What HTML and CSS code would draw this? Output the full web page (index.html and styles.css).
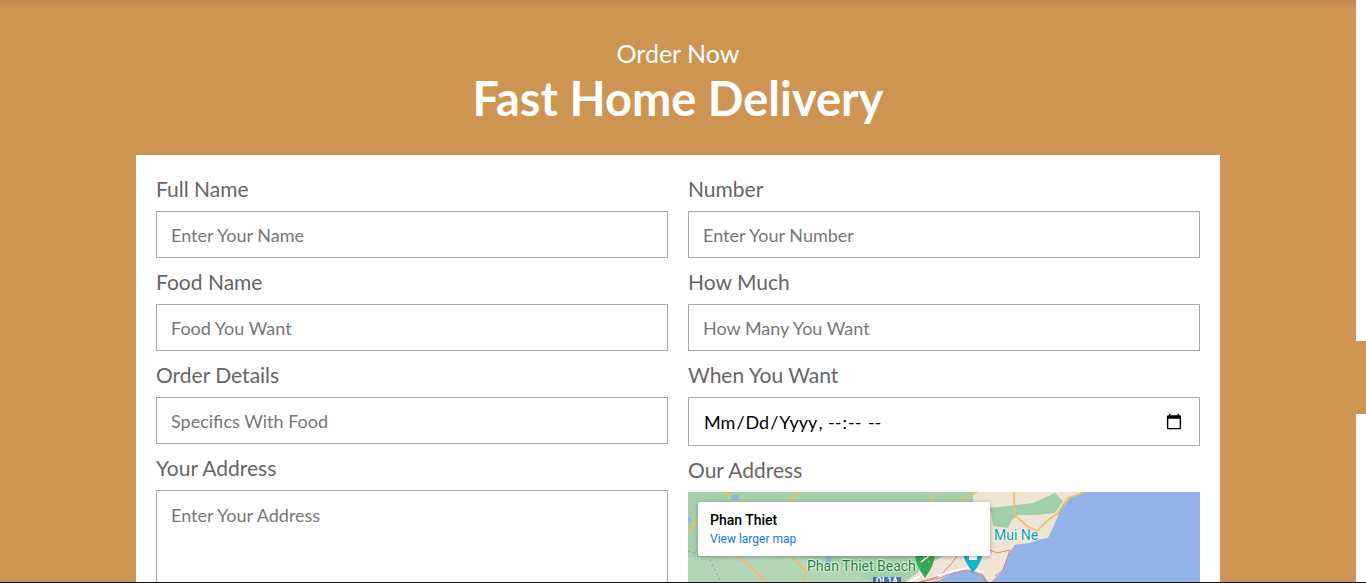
FILE: index.html
```html
<!DOCTYPE html>
<html lang="en">
<head>
<meta charset="utf-8">
<title>Fast Home Delivery</title>
<link rel="stylesheet" href="styles.css">
</head>
<body>
<main class="order">
  <div class="shade"></div>
  <header class="heading">
    <h3>Order Now</h3>
    <h1>Fast Home Delivery</h1>
  </header>
  <form class="card">
    <div class="col">
      <label class="field"><span>Full Name</span><input type="text" placeholder="Enter Your Name"></label>
      <label class="field"><span>Food Name</span><input type="text" placeholder="Food You Want"></label>
      <label class="field"><span>Order Details</span><input type="text" placeholder="Specifics With Food"></label>
      <label class="field"><span>Your Address</span><textarea placeholder="Enter Your Address"></textarea></label>
    </div>
    <div class="col">
      <label class="field"><span>Number</span><input type="text" placeholder="Enter Your Number"></label>
      <label class="field"><span>How Much</span><input type="text" placeholder="How Many You Want"></label>
      <label class="field"><span>When You Want</span><input class="when" type="datetime-local"></label>
      <div class="field map-field"><span>Our Address</span>
        <div class="map">
          <svg class="map-art" width="512" height="92" viewBox="0 0 512 92">
            <rect width="512" height="92" fill="#a6d0ab"/>
            <path d="M0 66L20 64L60 64L110 64L150 70L185 92H0Z" fill="#b4d6b8"/>
            <path d="M285 0H397L382 6L372 19L365 36L360 46L350 48L342 51L327 53L320 63L315 78L302 91L232 92L215 92L240 72L285 50Z" fill="#ece5d6"/>
            <path d="M329 13L345 11L367 1L375 9L367 21L349 23L330 23L324 28L320 36L305 34L302 16Z" fill="#a0cfa9"/>
            <path d="M397 0H512V92H302L315 78L320 63L327 53L342 51L350 48L360 46L365 36L372 19L382 6Z" fill="#93b3e8"/>
            <path d="M302 92L295 83L279 78L265 81L252 88L232 92Z" fill="#93b3e8"/>
            <g fill="none" stroke="#efbe68" stroke-width="1.800">
              <path d="M326 0L327 23L339 34L349 39L359 29L370 21L380 6L397 0"/>
              <path d="M289 0L275 8L268 14"/>
              <path d="M0 38L10 29L20 18"/>
              <path d="M35 0L50 8L70 14"/>
              <path d="M112 0L100 10"/>
              <path d="M50 64L67 79L80 92"/>
              <path d="M103 64L118 79L115 92"/>
              <path d="M247 0L243 10"/>
            </g>
            <path d="M0 59L20 64L33 90" fill="none" stroke="#8a9a8a" stroke-width="1" stroke-dasharray="2 3"/>
            <path d="M138 64h5v10h-6zM43 3h8v5h-8zM0 25h3v6H0z" fill="#8fb6d8"/>
            <path d="M225 92L252 84L264 71L269 64M302 58L309 61L322 58L315 78L307 84M232 90L252 86L265 81L279 78L295 83L298 92" fill="none" stroke="#ef7b6d" stroke-width="1"/>
            <path d="M222 90L240 78M250 84L265 79L280 76L296 80" fill="none" stroke="#fff" stroke-width="2"/>
            <path d="M227 62a10 10 0 0 1 20 0q0 10-10 24q-10-14-10-24z" fill="#34a853"/>
            <path d="M233 70l8-6M236 66h.5M240 70h.5" stroke="#fff" stroke-width="1.500" fill="none"/>
            <path d="M275 60h20q0 8-10 21q-10-13-10-21z" fill="#12b5cb"/>
            <rect x="281" y="64" width="8" height="4" fill="#fff"/>
            <rect x="185" y="85" width="28" height="7" fill="#3b74b8"/>
            <text x="199" y="92" fill="#fff" font-family="Roboto, sans-serif" font-size="9" font-weight="700" text-anchor="middle">QL1A</text>
          </svg>
          <em class="mui">Mui Ne</em>
          <em class="beach">Phan Thiet Beach</em>
          <div class="info"><strong>Phan Thiet</strong><a href="#">View larger map</a></div>
        </div>
      </div>
    </div>
  </form>
  <div class="bump"></div>
</main>
</body>
</html>
```
FILE: styles.css
```css
* { box-sizing: border-box; }
html, body { margin: 0; height: 583px; overflow: hidden; background: #fff; }
body { border-bottom: 1px solid #111; font-family: "Liberation Sans Narrow", "Lato", sans-serif; }
.order { position: relative; width: 1356px; height: 582px; background: #cd9452; }
.shade { position: absolute; inset: 0 0 auto 0; height: 8px; background: linear-gradient(#bd8850, #cd9452); }
.heading { height: 155px; padding-top: 39px; text-align: center; color: #fff; }
.heading h3 { margin: 0; font-size: 25px; font-weight: 400; line-height: 29px; }
.heading h1 { margin: 0; font-size: 47px; font-weight: 700; line-height: 60px; }
.card { display: grid; grid-template-columns: 1fr 1fr; gap: 20px; width: 1084px; height: 427px; margin-left: 136px; padding: 20px 20px 0; background: #fff; overflow: hidden; }
.col { display: flex; flex-direction: column; gap: 10px; min-width: 0; }
.field { display: flex; flex-direction: column; gap: 8px; }
.field > span { height: 28px; font-size: 21px; line-height: 28px; color: #666; }
.field input, .field textarea { display: block; width: 100%; height: 47px; padding: 0 14px; border: 1px solid #aaa; border-radius: 0; font: 18px/24px "Liberation Sans Narrow", "Lato", sans-serif; color: #666; background: #fff; outline: 0; }
.field textarea { height: 120px; padding-top: 12px; resize: none; }
.field ::placeholder { color: #777; opacity: 1; }
.field .when { height: 49px; color: #000; text-transform: capitalize; }
.map { position: relative; height: 92px; overflow: hidden; font-family: Roboto, sans-serif; }
.map-art { display: block; }
.info { position: absolute; left: 10px; top: 10px; width: 292px; height: 54px; padding: 10px 12px; background: #fff; border-radius: 2px; box-shadow: 0 1px 4px rgba(0,0,0,.3); }
.info strong { display: block; font: 500 14px/17px Roboto, sans-serif; color: #000; }
.info a { display: block; margin-top: 3px; font: 12px/15px Roboto, sans-serif; color: #1a73e8; text-decoration: none; }
.map em { position: absolute; font-style: normal; line-height: 16px; text-shadow: 0 0 2px #fff, 0 0 2px #fff, 0 0 2px #fff; }
.mui { left: 306px; top: 35px; font-size: 14px; color: #129eaf; }
.beach { left: 119px; top: 66px; font-size: 14px; color: #188038; }
.bump { position: absolute; left: 1356px; top: 341px; width: 10px; height: 73px; background: #cd9452; }
```
